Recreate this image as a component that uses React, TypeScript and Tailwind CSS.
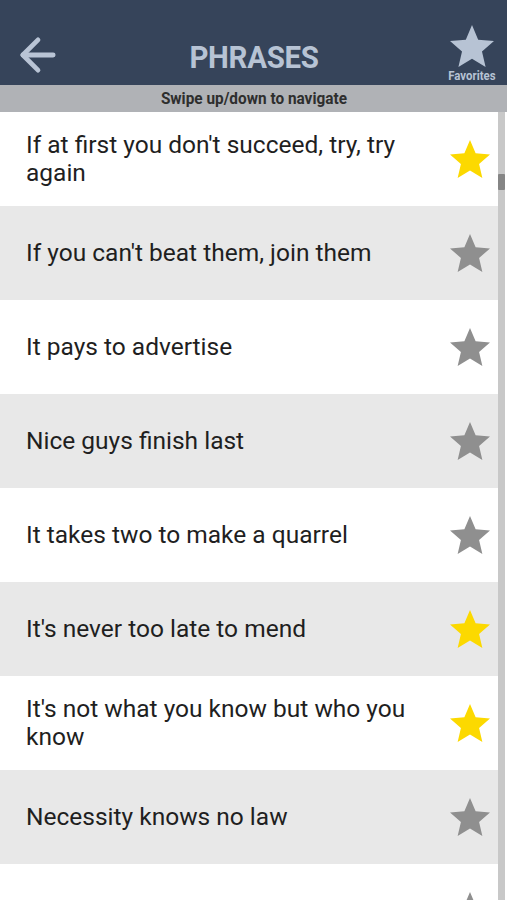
import { ArrowLeft } from 'lucide-react';

const phrases = [
  { text: "If at first you don't succeed, try, try again", fav: true },
  { text: "If you can't beat them, join them", fav: false },
  { text: 'It pays to advertise', fav: false },
  { text: 'Nice guys finish last', fav: false },
  { text: 'It takes two to make a quarrel', fav: false },
  { text: "It's never too late to mend", fav: true },
  { text: "It's not what you know but who you know", fav: true },
  { text: 'Necessity knows no law', fav: false },
  { text: '', fav: false },
];

function Star({ className }: { className?: string }) {
  return (
    <svg viewBox="2 2 20 19" className={className} fill="currentColor">
      <path d="M12 17.27L18.18 21l-1.64-7.03L22 9.24l-7.19-.61L12 2 9.19 8.63 2 9.24l5.46 4.73L5.82 21z" />
    </svg>
  );
}

export default function App() {
  return (
    <div className="w-[507px] h-[900px] overflow-hidden bg-white flex flex-col font-['Roboto',sans-serif]">
      <header className="h-[85px] shrink-0 bg-[#36445a] flex items-end justify-between pb-[2px] pl-[12px] pr-[10px]">
        <ArrowLeft className="w-[52px] h-[52px] mb-[2px] text-[#b9c4d5]" strokeWidth={2.2} />
        <h1 className="text-[31px] font-bold text-[#b7c3d4] tracking-[-0.3px] mb-[2px] mr-[4px] scale-x-[0.95]">PHRASES</h1>
        <div className="flex flex-col items-center">
          <Star className="w-[44px] h-[42px] text-[#b7c3d4]" />
          <span className="text-[12px] font-bold text-[#b7c3d4] leading-[14px] mt-[2px] scale-x-[0.95]">Favorites</span>
        </div>
      </header>
      <div className="h-[27px] shrink-0 bg-[#b0b2b6] flex items-center justify-center">
        <span className="text-[16px] font-bold text-[#2e2e2e] scale-x-[0.96]">Swipe up/down to navigate</span>
      </div>
      <div className="flex flex-1 min-h-0">
        <ul className="flex-1 flex flex-col">
          {phrases.map((p, i) => (
            <li
              key={i}
              className={`h-[94px] shrink-0 flex items-center justify-between pl-[26px] pr-[8px] ${i % 2 === 1 ? 'bg-[#e8e8e8]' : 'bg-white'}`}
            >
              <span className="text-[24.5px] leading-[28px] text-[#1f1f1f] max-w-[400px]">{p.text}</span>
              <Star className={`w-[40px] h-[38px] shrink-0 ${p.fav ? 'text-[#fcd900]' : 'text-[#8f8f8f]'}`} />
            </li>
          ))}
        </ul>
        <div className="w-[7px] mr-[2px] bg-[#c8c8c8] flex flex-col">
          <div className="h-[62px] shrink-0" />
          <div className="h-[16px] bg-[#858585] rounded-[1px]" />
        </div>
      </div>
    </div>
  );
}
